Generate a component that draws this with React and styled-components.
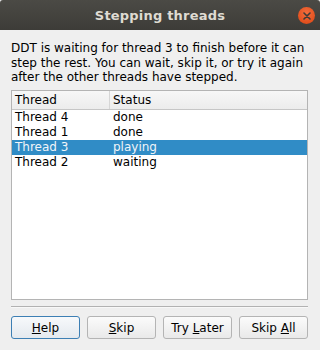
import React from 'react'
import styled, { createGlobalStyle } from 'styled-components'

const Global = createGlobalStyle`
  html, body { margin: 0; padding: 0; background: #efefef; }
  * { box-sizing: border-box; }
`

const threads = [
  { name: 'Thread 4', status: 'done' },
  { name: 'Thread 1', status: 'done' },
  { name: 'Thread 3', status: 'playing', selected: true },
  { name: 'Thread 2', status: 'waiting' },
]

const Window = styled.div`
  width: 320px;
  height: 350px;
  display: flex;
  flex-direction: column;
  background: #efefef;
  font-family: "DejaVu Sans", sans-serif;
  font-size: 12px;
  color: #000;
  overflow: hidden;
  border-radius: 3px 3px 0 0;
`

const TitleBar = styled.div`
  height: 30px;
  flex: none;
  position: relative;
  display: flex;
  align-items: center;
  justify-content: center;
  background: linear-gradient(#4b4a45, #3d3c38);
  color: #dfdbd2;
  font-weight: bold;
  font-size: 13px;
  letter-spacing: 0.2px;
`

const CloseButton = styled.div`
  position: absolute;
  right: 5px;
  top: 7px;
  width: 17px;
  height: 17px;
  border-radius: 50%;
  background: radial-gradient(circle at 50% 35%, #f26d3d, #e2501e 70%, #c9441a);
  display: flex;
  align-items: center;
  justify-content: center;
`

const Body = styled.div`
  flex: 1;
  display: flex;
  flex-direction: column;
  padding: 11px 12px 11px 11px;
`

const Message = styled.p`
  margin: 0 0 5px;
  line-height: 14.5px;
`

const List = styled.div`
  flex: 1;
  background: #fff;
  border: 1px solid #b4b4b4;
  display: flex;
  flex-direction: column;
`

const Row = styled.div`
  display: grid;
  grid-template-columns: 98px 1fr;
  height: ${p => (p.$header ? '19px' : '15px')};
  align-items: center;
  background: ${p =>
    p.$header ? 'linear-gradient(#f7f7f7, #ececec)' : p.$selected ? '#308cc6' : 'transparent'};
  color: ${p => (p.$selected ? '#f0f4f8' : '#000')};
  border-bottom: ${p => (p.$header ? '1px solid #c6c6c6' : 'none')};
`

const Cell = styled.div`
  padding-left: 3px;
  height: 100%;
  display: flex;
  align-items: center;
  white-space: nowrap;
  border-right: ${p => (p.$divider ? '1px solid #d6d6d6' : 'none')};
`

const Separator = styled.div`
  height: 2px;
  margin: 6px 0 8px;
  border-top: 1px solid #b2b2b2;
  border-bottom: 1px solid #f8f8f8;
`

const ButtonRow = styled.div`
  display: grid;
  grid-template-columns: repeat(4, 1fr);
  gap: 7px;
`

const Button = styled.button`
  height: 23px;
  padding: 0;
  font-family: "DejaVu Sans", sans-serif;
  font-size: 12px;
  color: #000;
  border-radius: 3px;
  border: 1px solid ${p => (p.$focused ? '#3d7fb4' : '#b4b4b4')};
  background: ${p =>
    p.$focused ? 'linear-gradient(#f7f9fb, #e4e9ee)' : 'linear-gradient(#fbfbfb, #e9e9e9)'};
`

const Key = styled.span`
  text-decoration: underline;
`

export default function App() {
  return (
    <Window>
      <Global />
      <TitleBar>
        Stepping threads
        <CloseButton>
          <svg width="8" height="8" viewBox="0 0 8 8">
            <path d="M1 1L7 7M7 1L1 7" stroke="#3c3b37" strokeWidth="1.6" strokeLinecap="round" />
          </svg>
        </CloseButton>
      </TitleBar>
      <Body>
        <Message>
          DDT is waiting for thread 3 to finish before it can step the rest. You can wait, skip it,
          or try it again after the other threads have stepped.
        </Message>
        <List>
          <Row $header>
            <Cell $divider>Thread</Cell>
            <Cell>Status</Cell>
          </Row>
          {threads.map(t => (
            <Row key={t.name} $selected={t.selected}>
              <Cell>{t.name}</Cell>
              <Cell>{t.status}</Cell>
            </Row>
          ))}
        </List>
        <Separator />
        <ButtonRow>
          <Button $focused><Key>H</Key>elp</Button>
          <Button><Key>S</Key>kip</Button>
          <Button>Try <Key>L</Key>ater</Button>
          <Button>Skip <Key>A</Key>ll</Button>
        </ButtonRow>
      </Body>
    </Window>
  )
}
